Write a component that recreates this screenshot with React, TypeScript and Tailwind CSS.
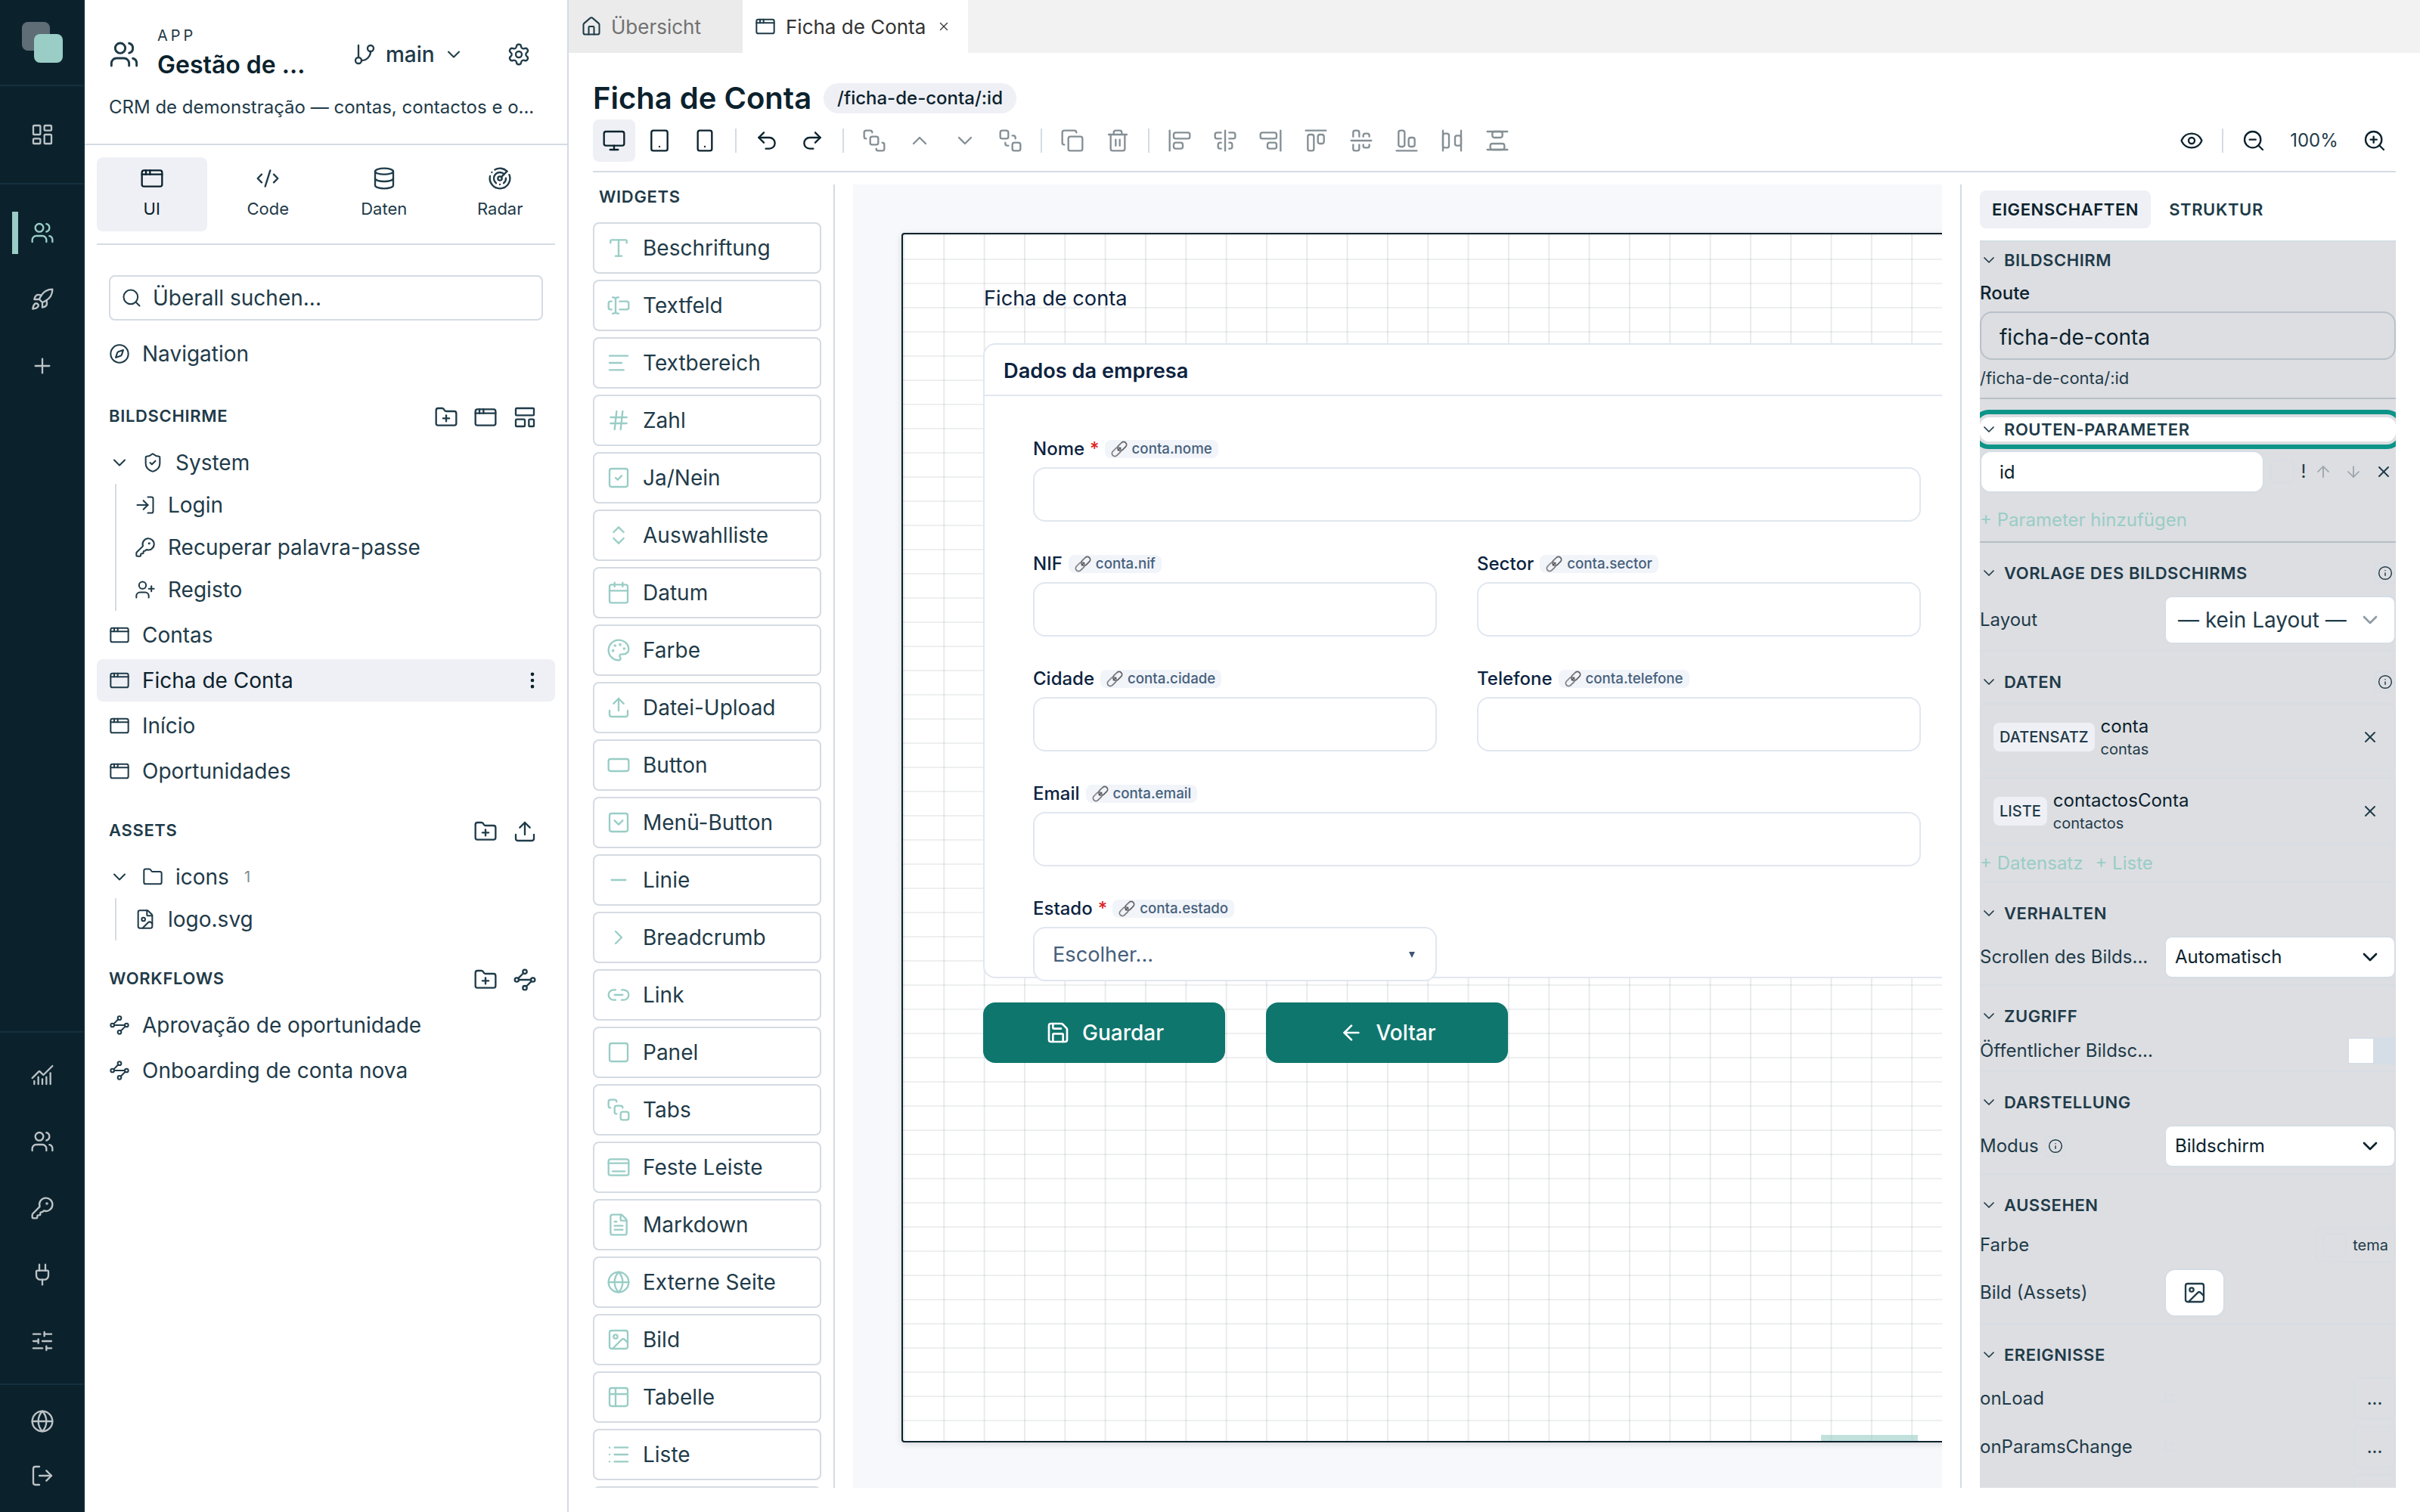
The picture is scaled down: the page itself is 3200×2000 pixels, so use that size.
import type { ReactNode } from "react";
import {
  AlignCenterHorizontal,
  AlignCenterVertical,
  AlignEndHorizontal,
  AlignEndVertical,
  AlignHorizontalSpaceBetween,
  AlignLeft,
  AlignStartHorizontal,
  AlignStartVertical,
  AlignVerticalSpaceBetween,
  AppWindow,
  ArrowDown,
  ArrowLeft,
  ArrowUp,
  BringToFront,
  Calendar,
  ChartNoAxesCombined,
  ChevronDown,
  ChevronRight,
  ChevronUp,
  ChevronsUpDown,
  CodeXml,
  Compass,
  Copy,
  Database,
  Dock,
  EllipsisVertical,
  Eye,
  FileImage,
  FileText,
  Folder,
  FolderPlus,
  GitBranch,
  Globe,
  Hash,
  House,
  Image as ImageIcon,
  Info,
  KeyRound,
  LayoutDashboard,
  LayoutTemplate,
  Link2,
  List,
  LogIn,
  LogOut,
  Minus,
  Monitor,
  Palette,
  Plug,
  Plus,
  Radar,
  RectangleHorizontal,
  Redo2,
  Rocket,
  Save,
  Search,
  SendToBack,
  Settings,
  ShieldCheck,
  SlidersHorizontal,
  Smartphone,
  Square,
  SquareCheck,
  SquareChevronDown,
  SquareStack,
  Table2,
  Tablet,
  TextCursorInput,
  Trash2,
  Type,
  Undo2,
  Upload,
  UserPlus,
  Users,
  X,
  ZoomIn,
  ZoomOut,
  createLucideIcon,
  type LucideIcon,
} from "lucide-react";
import clsx from "clsx";

const Workflow = createLucideIcon("workflow-nodes", [
  ["path", { d: "m10.586 5.414-5.172 5.172", key: "top-left" }],
  ["path", { d: "m18.586 13.414-5.172 5.172", key: "right-bottom" }],
  ["path", { d: "M6 12h12", key: "middle" }],
  ["circle", { cx: "12", cy: "4", r: "2", key: "top" }],
  ["circle", { cx: "4", cy: "12", r: "2", key: "left" }],
  ["circle", { cx: "20", cy: "12", r: "2", key: "right" }],
  ["circle", { cx: "12", cy: "20", r: "2", key: "bottom" }],
]);

function RailButton({ icon: Icon, active }: { icon: LucideIcon; active?: boolean }) {
  return (
    <button
      className={clsx(
        "relative flex h-14 w-full items-center justify-center",
        active ? "text-[#99cdc6]" : "text-[#bdc3c6]"
      )}
    >
      {active && <span className="absolute left-4 top-0 h-14 w-2 bg-[#99cdc6]" />}
      <Icon size={32} strokeWidth={1.75} className="ml-0.5" />
    </button>
  );
}

function Rail() {
  return (
    <nav className="flex h-full w-28 shrink-0 flex-col border-r-2 border-[#0d2936] bg-[#0b222d]">
      <div className="flex h-[114px] items-center justify-center border-b-2 border-[#15303e]">
        <svg width="56" height="56" viewBox="0 0 56 56" className="ml-0.5">
          <rect x="1" y="1" width="37" height="38" rx="8" fill="#5f6d76" />
          <rect x="17" y="17" width="38" height="38" rx="8" fill="#99cdc6" />
        </svg>
      </div>
      <div className="flex h-[130px] items-center border-b-2 border-[#15303e]">
        <RailButton icon={LayoutDashboard} />
      </div>
      <div className="flex flex-col gap-8 pt-9">
        <RailButton icon={Users} active />
        <RailButton icon={Rocket} />
        <RailButton icon={Plus} />
      </div>
      <div className="mt-auto flex flex-col gap-8 border-t-2 border-[#15303e] pb-7 pt-7">
        <RailButton icon={ChartNoAxesCombined} />
        <RailButton icon={Users} />
        <RailButton icon={KeyRound} />
        <RailButton icon={Plug} />
        <RailButton icon={SlidersHorizontal} />
      </div>
      <div className="flex h-[170px] flex-col gap-4 border-t-2 border-[#15303e] pt-5">
        <RailButton icon={Globe} />
        <RailButton icon={LogOut} />
      </div>
    </nav>
  );
}

function TreeRow({
  icon: Icon,
  label,
  active,
  nested,
}: {
  icon: LucideIcon;
  label: string;
  active?: boolean;
  nested?: boolean;
}) {
  return (
    <div
      className={clsx(
        "flex h-14 items-center rounded-lg pr-4",
        nested ? "pl-6" : "pl-4",
        active && "bg-[#eff0f5] text-[#0b222d]"
      )}
    >
      <Icon size={28} strokeWidth={1.75} className="shrink-0 text-[#1f3b49]" />
      <span className="ml-4">{label}</span>
      {active && <EllipsisVertical size={28} className="ml-auto" />}
    </div>
  );
}

function TreeGroup({
  icon: Icon,
  label,
  count,
  children,
}: {
  icon: LucideIcon;
  label: string;
  count?: string;
  children: ReactNode;
}) {
  return (
    <div>
      <div className="flex h-14 items-center pl-4">
        <ChevronDown size={28} strokeWidth={1.75} />
        <Icon size={28} strokeWidth={1.75} className="ml-4" />
        <span className="ml-4">{label}</span>
        {count && <span className="ml-5 text-[20px] text-[#7b8a94]">{count}</span>}
      </div>
      <div className="ml-6 border-l-2 border-[#d5dbe3]">{children}</div>
    </div>
  );
}

function TreeHeader({ title, icons }: { title: string; icons: LucideIcon[] }) {
  return (
    <div className="flex h-16 items-center justify-between pl-4 pr-6">
      <span className="-mt-1 text-[22px] font-semibold tracking-[0.66px]">{title}</span>
      <div className="flex gap-5">
        {icons.map((Icon, i) => (
          <Icon key={i} size={32} strokeWidth={1.75} />
        ))}
      </div>
    </div>
  );
}

const modes: { icon: LucideIcon; label: string }[] = [
  { icon: AppWindow, label: "UI" },
  { icon: CodeXml, label: "Code" },
  { icon: Database, label: "Daten" },
  { icon: Radar, label: "Radar" },
];

function Sidebar() {
  return (
    <aside className="flex h-full w-[640px] shrink-0 flex-col border-r-2 border-[#d5dbe3] text-[28px] text-[#1f3b49]">
      <header className="h-48 border-b-2 border-[#d5dbe3] px-8">
        <div className="flex h-[108px] items-center pt-9">
          <Users size={40} strokeWidth={1.75} />
          <div className="ml-6 w-[220px]">
            <div className="pb-1.5 text-[20px] leading-[22px] tracking-[4px]">APP</div>
            <div className="whitespace-nowrap text-[32px] font-semibold leading-[44px] text-[#0b222d]">
              Gestão de ...
            </div>
          </div>
          <div className="ml-[38px] flex items-center">
            <GitBranch size={32} strokeWidth={1.75} />
            <span className="ml-3 font-medium">main</span>
            <ChevronDown size={28} strokeWidth={1.75} className="ml-[11px]" />
            <Settings size={32} strokeWidth={1.75} className="ml-14" />
          </div>
        </div>
        <p className="mt-4 whitespace-nowrap text-[24px] leading-9">
          CRM de demonstração — contas, contactos e o...
        </p>
      </header>

      <div className="mx-4 grid h-[132px] grid-cols-4 gap-2 border-b-2 border-[#d5dbe3] pt-4">
        {modes.map(({ icon: Icon, label }, i) => (
          <div
            key={label}
            className={clsx(
              "flex h-[98px] flex-col items-center rounded-lg pt-3",
              i === 0 && "bg-[#eff0f5] text-[#0b222d]"
            )}
          >
            <Icon size={32} strokeWidth={1.75} />
            <span className="mt-2 text-[22px] leading-8">{label}</span>
          </div>
        ))}
      </div>

      <div className="px-4 pt-10">
        <div className="mx-4 flex h-[60px] w-[574px] items-center rounded-lg border-2 border-[#d5dbe3] pl-3.5">
          <Search size={28} strokeWidth={1.75} />
          <span className="ml-3.5">Überall suchen...</span>
        </div>
        <div className="mt-4">
          <TreeRow icon={Compass} label="Navigation" />
        </div>

        <div className="mt-6">
          <TreeHeader title="BILDSCHIRME" icons={[FolderPlus, AppWindow, LayoutTemplate]} />
          <TreeGroup icon={ShieldCheck} label="System">
            <TreeRow nested icon={LogIn} label="Login" />
            <TreeRow nested icon={KeyRound} label="Recuperar palavra-passe" />
            <TreeRow nested icon={UserPlus} label="Registo" />
          </TreeGroup>
          <div className="mt-1 flex flex-col gap-1">
            <TreeRow icon={AppWindow} label="Contas" />
            <TreeRow icon={AppWindow} label="Ficha de Conta" active />
            <TreeRow icon={AppWindow} label="Início" />
            <TreeRow icon={AppWindow} label="Oportunidades" />
          </div>
        </div>

        <div className="mt-5">
          <TreeHeader title="ASSETS" icons={[FolderPlus, Upload]} />
          <TreeGroup icon={Folder} label="icons" count="1">
            <TreeRow nested icon={FileImage} label="logo.svg" />
          </TreeGroup>
        </div>

        <div className="mt-5">
          <TreeHeader title="WORKFLOWS" icons={[FolderPlus, Workflow]} />
          <div className="flex flex-col gap-1">
            <TreeRow icon={Workflow} label="Aprovação de oportunidade" />
            <TreeRow icon={Workflow} label="Onboarding de conta nova" />
          </div>
        </div>
      </div>
    </aside>
  );
}

function Tabs() {
  return (
    <div className="flex h-[70px] bg-[#f2f2f2] text-[26px] text-[#333333]">
      <div className="flex w-[230px] items-center bg-[#ebebeb] pl-4">
        <House size={28} strokeWidth={1.75} className="text-[#1f3b49]" />
        <span className="ml-3 text-[#717171]">Übersicht</span>
      </div>
      <div className="flex w-[298px] items-center bg-white pl-4">
        <AppWindow size={28} strokeWidth={1.75} className="text-[#1f3b49]" />
        <span className="ml-[13px]">Ficha de Conta</span>
        <X size={18} strokeWidth={1.75} className="ml-auto mr-[23px]" />
      </div>
    </div>
  );
}

function ToolButton({
  icon: Icon,
  active,
  disabled,
}: {
  icon: LucideIcon;
  active?: boolean;
  disabled?: boolean;
}) {
  return (
    <button
      className={clsx(
        "flex size-14 items-center justify-center rounded-lg text-[#0b222d]",
        active && "bg-[#eff0f5]",
        disabled && "opacity-50"
      )}
    >
      <Icon size={32} strokeWidth={1.75} />
    </button>
  );
}

function Divider() {
  return <span className="mx-2 h-8 w-0.5 bg-[#d5dbe3]" />;
}

const alignTools = [
  AlignStartVertical,
  AlignCenterVertical,
  AlignEndVertical,
  AlignStartHorizontal,
  AlignCenterHorizontal,
  AlignEndHorizontal,
  AlignHorizontalSpaceBetween,
  AlignVerticalSpaceBetween,
];

function Toolbar() {
  return (
    <div className="flex h-[70px] items-start gap-1 border-b-2 border-[#d5dbe3] [&>span]:mt-3">
      <ToolButton icon={Monitor} active />
      <ToolButton icon={Tablet} />
      <ToolButton icon={Smartphone} />
      <Divider />
      <ToolButton icon={Undo2} />
      <ToolButton icon={Redo2} />
      <Divider />
      <ToolButton icon={BringToFront} disabled />
      <ToolButton icon={ChevronUp} disabled />
      <ToolButton icon={ChevronDown} disabled />
      <ToolButton icon={SendToBack} disabled />
      <Divider />
      <ToolButton icon={Copy} disabled />
      <ToolButton icon={Trash2} disabled />
      <Divider />
      {alignTools.map((icon, i) => (
        <ToolButton key={i} icon={icon} disabled />
      ))}
      <div className="ml-auto flex gap-1 [&>span]:mt-3">
        <ToolButton icon={Eye} />
        <Divider />
        <ToolButton icon={ZoomOut} />
        <span className="w-24 text-center text-[24px] leading-8 text-[#1f3b49]">100%</span>
        <ToolButton icon={ZoomIn} />
      </div>
    </div>
  );
}

const widgets: { icon: LucideIcon; label: string }[] = [
  { icon: Type, label: "Beschriftung" },
  { icon: TextCursorInput, label: "Textfeld" },
  { icon: AlignLeft, label: "Textbereich" },
  { icon: Hash, label: "Zahl" },
  { icon: SquareCheck, label: "Ja/Nein" },
  { icon: ChevronsUpDown, label: "Auswahlliste" },
  { icon: Calendar, label: "Datum" },
  { icon: Palette, label: "Farbe" },
  { icon: Upload, label: "Datei-Upload" },
  { icon: RectangleHorizontal, label: "Button" },
  { icon: SquareChevronDown, label: "Menü-Button" },
  { icon: Minus, label: "Linie" },
  { icon: ChevronRight, label: "Breadcrumb" },
  { icon: Link2, label: "Link" },
  { icon: Square, label: "Panel" },
  { icon: SquareStack, label: "Tabs" },
  { icon: Dock, label: "Feste Leiste" },
  { icon: FileText, label: "Markdown" },
  { icon: Globe, label: "Externe Seite" },
  { icon: ImageIcon, label: "Bild" },
  { icon: Table2, label: "Tabelle" },
  { icon: List, label: "Liste" },
];

function WidgetPalette() {
  return (
    <section className="h-full w-80 shrink-0 overflow-hidden border-r-2 border-[#d5dbe3] pr-4">
      <h2 className="h-[50px] pl-2 text-[22px] font-semibold leading-[32px] tracking-[0.66px] text-[#1f3b49]">
        WIDGETS
      </h2>
      <div className="flex flex-col gap-2">
        {widgets.map(({ icon: Icon, label }) => (
          <div
            key={label}
            className="flex h-[68px] shrink-0 items-center gap-4 rounded-lg border-2 border-[#d5dbe3] pl-4 text-[28px] text-[#1f3b49]"
          >
            <Icon size={32} strokeWidth={1.75} className="text-[#99cdc6]" />
            {label}
          </div>
        ))}
        <div className="h-[68px] rounded-lg border-2 border-[#d5dbe3]" />
      </div>
    </section>
  );
}

function ChainLink() {
  return (
    <svg width="22" height="22" viewBox="0 0 22 22" fill="none" className="overflow-visible">
      <g transform="rotate(-45 11 11)">
        <rect x="9.5" y="7.2" width="13.5" height="7.6" rx="3.8" stroke="#626266" strokeWidth="1.8" />
        <rect x="-1" y="7.2" width="13.5" height="7.6" rx="3.8" stroke="#7d7d81" strokeWidth="1.8" />
        <path d="M3 7.8h6M13 7.8h6" stroke="#d8d8da" strokeWidth="0.7" />
        <path d="M8.5 11h5" stroke="#4c4c50" strokeWidth="1.2" strokeLinecap="round" />
      </g>
    </svg>
  );
}

function Field({
  label,
  binding,
  required,
  className,
  children,
}: {
  label: string;
  binding: string;
  required?: boolean;
  className?: string;
  children?: ReactNode;
}) {
  return (
    <div className={className}>
      <div className="flex h-[42px] items-start">
        <span className="text-[24px] font-medium leading-[35px] text-[#0c2340]">{label}</span>
        {required && (
          <span className="-mr-px ml-[7px] text-[24px] font-medium leading-[35px] text-[#dc2626]">
            *
          </span>
        )}
        <span className="ml-2 mt-1.5 flex h-6 items-center gap-1.5 rounded-lg bg-[#f1f4f9] px-2 text-[18.7px] font-medium text-[#46607c]">
          <ChainLink />
          {binding}
        </span>
      </div>
      <div className="flex h-[72px] items-center justify-between rounded-2xl border-2 border-[#e1e7f0] bg-white px-6 pt-0.5 text-[27.2px] text-[#46607c]">
        {children}
      </div>
    </div>
  );
}

function CanvasButton({ icon: Icon, label }: { icon: LucideIcon; label: string }) {
  return (
    <button className="flex h-20 w-80 items-center justify-center gap-4 rounded-2xl bg-[#0f766e] pl-0.5 text-[28px] font-medium text-white">
      <Icon size={32} strokeWidth={2} />
      {label}
    </button>
  );
}

function Canvas() {
  return (
    <div className="h-full w-[1440px] shrink-0 overflow-hidden bg-[#f7f8fb] pl-16 pt-16">
      <div className="relative h-[1600px] w-[2564px] rounded border-2 border-[#0b222d] bg-white bg-[linear-gradient(to_right,rgba(11,34,45,0.09)_2px,transparent_2px),linear-gradient(to_bottom,rgba(11,34,45,0.07)_2px,transparent_2px)] bg-[length:53.3333px_32px] pl-[106px] shadow-[0_2px_8px_rgba(0,0,0,0.15)]">
        <div className="h-36 pl-px pt-[64px] text-[27.2px] leading-[42px] text-[#0c2340]">
          Ficha de conta
        </div>
        <div className="h-[840px] w-[1400px] rounded-2xl border-2 border-[#e1e7f0] bg-white">
          <h3 className="h-[68px] border-b-2 border-[#e1e7f0] pl-[25px] text-[27.2px] font-semibold leading-[70px] text-[#0c2340]">
            Dados da empresa
          </h3>
          <div className="grid w-[1238px] grid-cols-[534px_587px] gap-x-[53px] gap-y-[38px] pl-16 pt-[52px]">
            <Field label="Nome" binding="conta.nome" required className="col-span-2" />
            <Field label="NIF" binding="conta.nif" />
            <Field label="Sector" binding="conta.sector" />
            <Field label="Cidade" binding="conta.cidade" />
            <Field label="Telefone" binding="conta.telefone" />
            <Field label="Email" binding="conta.email" className="col-span-2" />
            <Field label="Estado" binding="conta.estado" required>
              <span>Escolher...</span>
              <svg width="10" height="8" viewBox="0 0 10 8" className="mr-0.5">
                <path d="M1 0h8L5 8z" fill="#3c5674" />
              </svg>
            </Field>
          </div>
        </div>
        <div className="mt-8 flex gap-[54px]">
          <CanvasButton icon={Save} label="Guardar" />
          <CanvasButton icon={ArrowLeft} label="Voltar" />
        </div>
        <span className="absolute bottom-0 left-[1214px] h-2 w-32 bg-[#99cdc6]/60" />
      </div>
    </div>
  );
}

function InfoBadge({ className }: { className?: string }) {
  return (
    <span
      className={clsx(
        "flex size-7 items-center justify-center border-2 border-[#d7dde2]",
        className
      )}
    >
      <Info size={20} strokeWidth={1.75} className="shrink-0" />
    </span>
  );
}

function PropHeader({
  title,
  info,
  className,
}: {
  title: string;
  info?: boolean;
  className?: string;
}) {
  return (
    <div className={clsx("flex h-8 items-center", className)}>
      <ChevronDown size={24} strokeWidth={1.75} />
      <span className="ml-2 text-[22px] font-semibold leading-8 tracking-[0.55px]">{title}</span>
      {info && <InfoBadge className="ml-auto" />}
    </div>
  );
}

function PropRow({
  label,
  className,
  children,
}: {
  label: ReactNode;
  className: string;
  children: ReactNode;
}) {
  return (
    <div className={clsx("flex items-center justify-between", className)}>
      <span className="flex w-[244px] items-center whitespace-nowrap">{label}</span>
      {children}
    </div>
  );
}

function Select({ value }: { value: string }) {
  return (
    <div className="flex h-14 w-[306px] items-center justify-between rounded-[10px] border-2 border-[#d5dde4] bg-white pl-3 pr-4 text-[#0b222d]">
      {value}
      <ChevronDown size={32} />
    </div>
  );
}

function DataSource({ kind, name, table }: { kind: string; name: string; table: string }) {
  return (
    <div className="flex h-[90px] items-center rounded-lg border-2 border-[#d7dde2] pl-4">
      <span className="flex h-[38px] items-center rounded-lg bg-[#eff0f5] px-2 text-[20px] font-medium">
        {kind}
      </span>
      <div className="ml-2">
        <div className="text-[24px] leading-[32px] text-[#0b222d]">{name}</div>
        <div className="text-[20px] leading-[28px]">{table}</div>
      </div>
      <X size={24} strokeWidth={2} className="ml-auto mr-5" />
    </div>
  );
}

function EventRow({ name }: { name?: string }) {
  return (
    <div className="flex h-14 shrink-0 items-center">
      <span className="w-[244px]">{name}</span>
      {name && <span className="size-3 border-2 border-[#d7dde2]" />}
      <span className="ml-auto flex h-14 w-14 items-center justify-center rounded-lg border-2 border-[#d7dde2]">
        {name && "..."}
      </span>
    </div>
  );
}

function Properties() {
  return (
    <section className="flex h-full w-[550px] shrink-0 flex-col text-[24px] text-[#1f3b49]">
      <div className="flex h-[74px] gap-2 pt-2 text-[22px] font-semibold tracking-[0.6px]">
        <span className="flex h-[50px] items-center rounded-lg bg-[#eff0f5] px-4 text-[#0b222d]">
          EIGENSCHAFTEN
        </span>
        <span className="flex h-[50px] items-center px-4">STRUKTUR</span>
      </div>

      <div className="flex-1 overflow-hidden border-t-2 border-[#d3dde3] bg-[#dddee2]">
        <div className="h-[208px] border-b-2 border-[#b5bfc7] pt-2">
          <PropHeader title="BILDSCHIRM" />
          <div className="mt-[11px] font-medium leading-[34px] text-[#0b222d]">Route</div>
          <div className="mt-[7px] flex h-16 items-center rounded-2xl border-2 border-[#b8c1c9] pl-6 pt-1 text-[28px] text-[#0b222d]">
            ficha-de-conta
          </div>
          <div className="mt-2 text-[22px] leading-8">/ficha-de-conta/:id</div>
        </div>

        <div className="h-[190px] border-b-2 border-[#b5bfc7] pt-6">
          <PropHeader
            title="ROUTEN-PARAMETER"
            className="rounded-xl bg-white outline-6 outline-offset-4 outline-[#0d9488]"
          />
          <div className="mt-3 flex h-14 items-center">
            <div className="flex h-14 w-[376px] shrink-0 items-center rounded-[14px] border-2 border-[#d5dde4] bg-white pl-6 pt-0.5 text-[#0b222d]">
              id
            </div>
            <span className="ml-2 size-8 rounded-lg border-2 border-[#d7dde2]" />
            <span className="ml-1 w-4 text-center">!</span>
            <ArrowUp size={24} strokeWidth={1.75} className="ml-1.5 opacity-35" />
            <ArrowDown size={24} strokeWidth={1.75} className="ml-4 opacity-35" />
            <X size={24} strokeWidth={2} className="ml-4" />
          </div>
          <div className="mt-[18px] leading-9 text-[#99cdc6]">+ Parameter hinzufügen</div>
        </div>

        <div className="h-36 border-b-2 border-[#d7dde2] pt-6">
          <PropHeader title="VORLAGE DES BILDSCHIRMS" info />
          <PropRow label="Layout" className="mt-3.5 h-16">
            <div className="flex h-16 w-[306px] items-center justify-between rounded-[10px] border-2 border-[#d5dde4] bg-white px-4 text-[28px]">
              — kein Layout —
              <ChevronDown size={32} className="opacity-50" />
            </div>
          </PropRow>
        </div>

        <div className="h-[306px] border-b-2 border-[#d7dde2] pt-6">
          <PropHeader title="DATEN" info />
          <div className="mt-3 flex flex-col gap-2">
            <DataSource kind="DATENSATZ" name="conta" table="contas" />
            <DataSource kind="LISTE" name="contactosConta" table="contactos" />
          </div>
          <div className="mt-1.5 flex gap-4 leading-9 text-[#99cdc6]">
            <span>+ Datensatz</span>
            <span>+ Liste</span>
          </div>
        </div>

        <div className="h-[136px] border-b-2 border-[#d7dde2] pt-6">
          <PropHeader title="VERHALTEN" />
          <PropRow label="Scrollen des Bilds..." className="mt-3.5 h-14">
            <Select value="Automatisch" />
          </PropRow>
        </div>

        <div className="h-[114px] border-b-2 border-[#d7dde2] pt-6">
          <PropHeader title="ZUGRIFF" />
          <PropRow label="Öffentlicher Bildsc..." className="mt-3 h-9">
            <span className="h-9 w-16 border-2 border-r-0 border-[#d5dde4] bg-[#d5dde6]">
              <span className="block size-8 bg-white" />
            </span>
          </PropRow>
        </div>

        <div className="h-[136px] border-b-2 border-[#d7dde2] pt-6">
          <PropHeader title="DARSTELLUNG" />
          <PropRow
            label={
              <>
                Modus
                <InfoBadge className="ml-2" />
              </>
            }
            className="mt-3.5 h-14"
          >
            <Select value="Bildschirm" />
          </PropRow>
        </div>

        <div className="h-[198px] border-b-2 border-[#d7dde2] pt-6">
          <PropHeader title="AUSSEHEN" />
          <PropRow label="Farbe" className="mt-3.5 h-[46px]">
            <span className="flex h-[46px] items-center gap-2 rounded-lg border-2 border-[#d7dde2] px-2 text-[20px]">
              <span className="size-8 rounded-lg border-2 border-[#d7dde2]" />
              tema
            </span>
          </PropRow>
          <PropRow label="Bild (Assets)" className="mt-2 h-16">
            <span className="mr-auto flex h-16 w-20 items-center justify-center rounded-[14px] border-2 border-[#d5dde4] bg-white">
              <ImageIcon size={32} strokeWidth={1.75} />
            </span>
          </PropRow>
        </div>

        <div className="flex flex-col gap-2 pt-6">
          <PropHeader title="EREIGNISSE" className="mb-1.5" />
          <EventRow name="onLoad" />
          <EventRow name="onParamsChange" />
          <EventRow />
        </div>
      </div>
    </section>
  );
}

export default function App() {
  return (
    <div className="flex h-[2000px] w-[3200px] overflow-hidden bg-white font-['Inter',sans-serif] antialiased">
      <Rail />
      <Sidebar />
      <main className="flex min-w-0 flex-1 flex-col">
        <Tabs />
        <div className="flex min-h-0 flex-1 flex-col px-8 pb-8">
          <div className="flex h-[88px] items-end gap-4 pb-2">
            <h1 className="text-[40px] font-semibold leading-[41px] text-[#0b222d]">Ficha de Conta</h1>
            <span className="flex h-10 items-center rounded-full bg-[#eff0f5] px-[18px] text-[24px] font-medium text-[#0b222d]">
              /ficha-de-conta/:id
            </span>
          </div>
          <Toolbar />
          <div className="flex min-h-0 flex-1 pt-4">
            <WidgetPalette />
            <div className="ml-6 h-full w-[1466px] shrink-0 border-r-2 border-[#d5dbe3]">
              <Canvas />
            </div>
            <div className="ml-6 h-full">
              <Properties />
            </div>
          </div>
        </div>
      </main>
    </div>
  );
}
